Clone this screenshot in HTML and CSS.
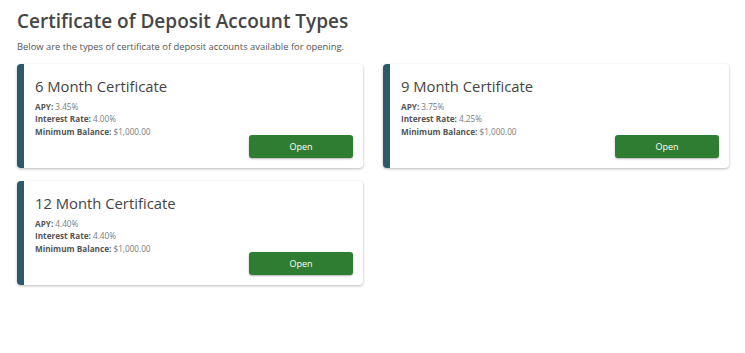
FILE: index.html
```html
<!DOCTYPE html>
<html lang="en">
<head>
<meta charset="UTF-8">
<meta name="viewport" content="width=device-width, initial-scale=1.0">
<title>Certificate of Deposit Account Types</title>
<link rel="stylesheet" href="styles.css">
</head>
<body>
<div class="page">
    <h1>Certificate of Deposit Account Types</h1>
    <p class="intro">Below are the types of certificate of deposit accounts available for opening.</p>
    <div class="cards">
        <div class="card">
            <h2>6 Month Certificate</h2>
            <div class="card-body">
                <div class="details">
                    <div><b>APY:</b> 3.45%</div>
                    <div><b>Interest Rate:</b> 4.00%</div>
                    <div><b>Minimum Balance:</b> $1,000.00</div>
                </div>
                <button>Open</button>
            </div>
        </div>
        <div class="card">
            <h2>9 Month Certificate</h2>
            <div class="card-body">
                <div class="details">
                    <div><b>APY:</b> 3.75%</div>
                    <div><b>Interest Rate:</b> 4.25%</div>
                    <div><b>Minimum Balance:</b> $1,000.00</div>
                </div>
                <button>Open</button>
            </div>
        </div>
        <div class="card">
            <h2>12 Month Certificate</h2>
            <div class="card-body">
                <div class="details">
                    <div><b>APY:</b> 4.40%</div>
                    <div><b>Interest Rate:</b> 4.40%</div>
                    <div><b>Minimum Balance:</b> $1,000.00</div>
                </div>
                <button>Open</button>
            </div>
        </div>
    </div>
</div>
</body>
</html>
```

FILE: styles.css
```css
body {
    font-family: "Open Sans", sans-serif;
    margin: 0;
    background-color: #ffffff;
    color: #444444;
}
.page {
    padding: 8px 17px 16px 17px;
}
h1 {
    font-size: 19px;
    font-weight: 600;
    color: #464646;
    margin: 0;
    line-height: 26px;
}
.intro {
    font-size: 9.4px;
    color: #555555;
    margin: 6px 0 10px 0;
    line-height: 14px;
}
.cards {
    display: grid;
    grid-template-columns: 346px 346px;
    column-gap: 20px;
    row-gap: 13px;
}
.card {
    display: flex;
    flex-direction: column;
    background-color: #ffffff;
    border-left: 7px solid #2b5a6b;
    border-radius: 4px;
    box-shadow: 0 1px 3px rgba(0, 0, 0, 0.28);
    padding: 12px 10px 10px 11px;
    height: 104px;
    box-sizing: border-box;
}
.card h2 {
    font-size: 14.8px;
    font-weight: 400;
    color: #444444;
    margin: 0 0 5px 0;
    line-height: 20px;
}
.card-body {
    flex: 1;
    display: flex;
    justify-content: space-between;
    align-items: flex-end;
}
.details {
    align-self: flex-start;
    font-size: 8.2px;
    line-height: 12.4px;
    color: #7a7a7a;
}
.details b {
    color: #555555;
    font-weight: 700;
}
button {
    width: 104px;
    height: 23px;
    background-color: #2e7d32;
    color: #ffffff;
    border: none;
    border-radius: 3px;
    font-family: "Open Sans", sans-serif;
    font-size: 9px;
    box-shadow: 0 1px 2px rgba(0, 0, 0, 0.3);
    cursor: pointer;
}
```
